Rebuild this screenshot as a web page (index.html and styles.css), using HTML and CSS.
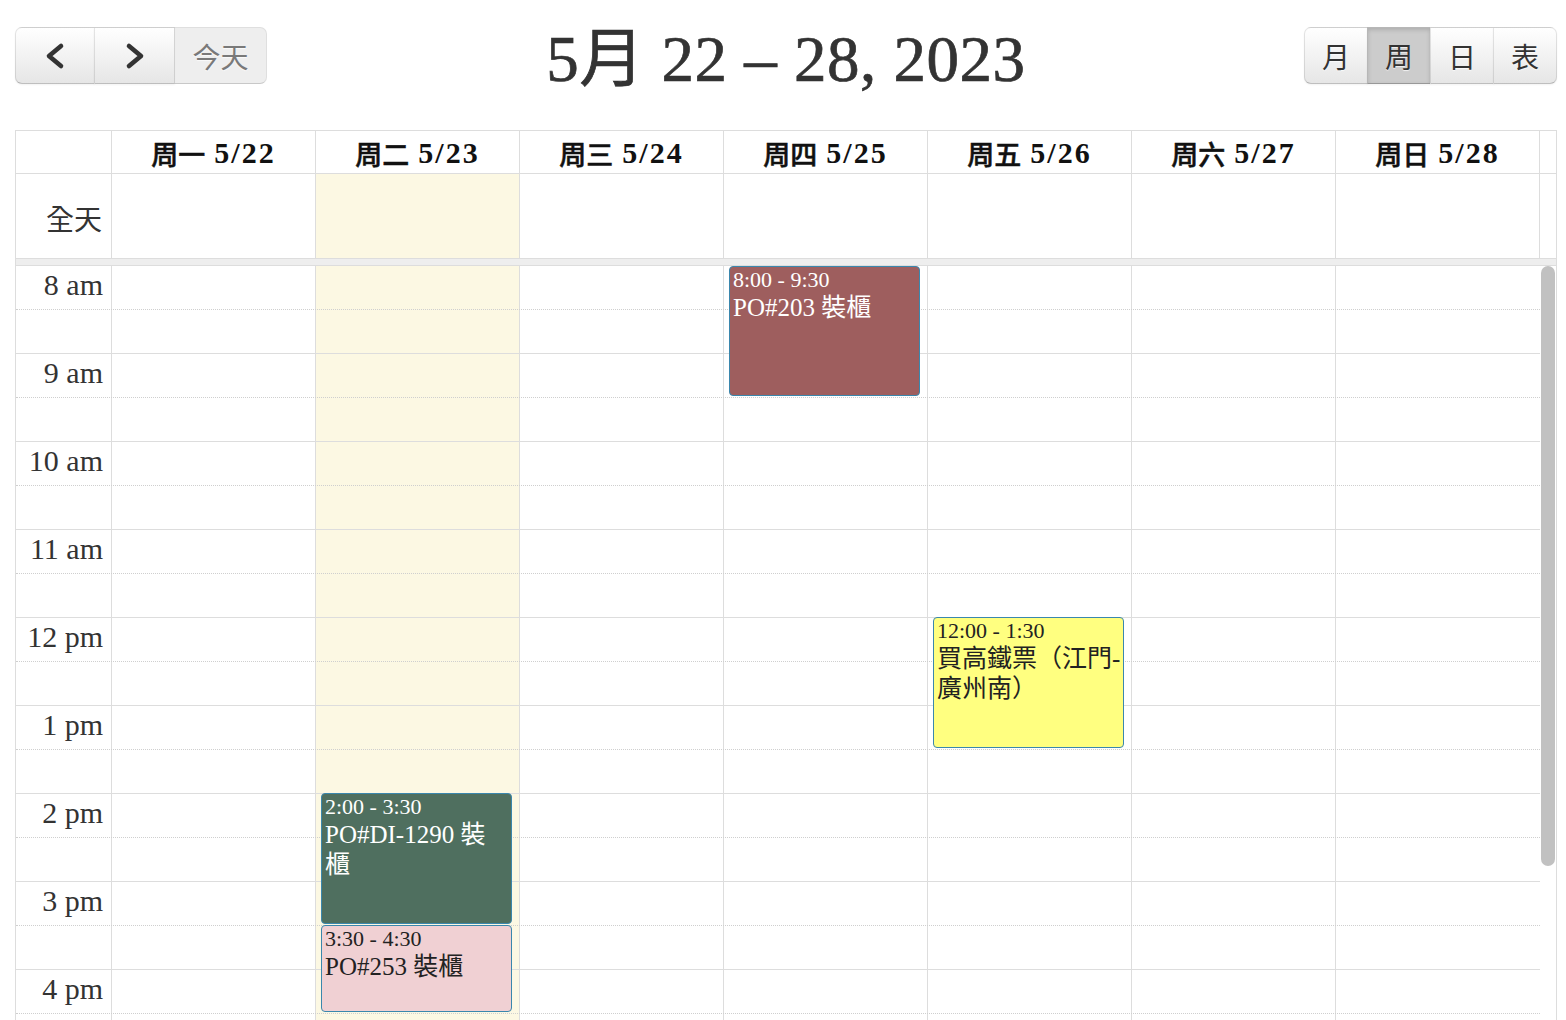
FILE: index.html
```html
<!DOCTYPE html>
<html lang="zh-Hant">
<head>
<meta charset="utf-8">
<title>周 5月 22 – 28, 2023</title>
<link rel="stylesheet" href="styles.css">
</head>
<body>
<div class="cal">
  <div class="toolbar">
    <div class="tb-left">
      <div class="btn-group">
        <button class="btn btn-nav" aria-label="prev">
          <svg width="22" height="28" viewBox="0 0 22 28"><path d="M17 4 L5 14 L17 24" fill="none" stroke="#333" stroke-width="4.6" stroke-linecap="round" stroke-linejoin="round"/></svg>
        </button>
        <button class="btn btn-nav btn-next" aria-label="next">
          <svg width="22" height="28" viewBox="0 0 22 28"><path d="M5 4 L17 14 L5 24" fill="none" stroke="#333" stroke-width="4.6" stroke-linecap="round" stroke-linejoin="round"/></svg>
        </button>
        <button class="btn btn-today is-disabled">今天</button>
      </div>
    </div>
    <h2 class="title">5月 22 – 28, 2023</h2>
    <div class="tb-right">
      <div class="btn-group">
        <button class="btn btn-view">月</button>
        <button class="btn btn-view is-active">周</button>
        <button class="btn btn-view">日</button>
        <button class="btn btn-view">表</button>
      </div>
    </div>
  </div>

  <div class="view">
    <div class="row head">
      <div class="axis"></div>
      <div class="dcell hcell"><span class="wd">周一</span><span class="dt">5/22</span></div>
      <div class="dcell hcell"><span class="wd">周二</span><span class="dt">5/23</span></div>
      <div class="dcell hcell"><span class="wd">周三</span><span class="dt">5/24</span></div>
      <div class="dcell hcell"><span class="wd">周四</span><span class="dt">5/25</span></div>
      <div class="dcell hcell"><span class="wd">周五</span><span class="dt">5/26</span></div>
      <div class="dcell hcell"><span class="wd">周六</span><span class="dt">5/27</span></div>
      <div class="dcell hcell"><span class="wd">周日</span><span class="dt">5/28</span></div>
      <div class="gutter"></div>
    </div>

    <div class="row allday">
      <div class="axis allday-label">全天</div>
      <div class="dcell"></div>
      <div class="dcell today"></div>
      <div class="dcell"></div>
      <div class="dcell"></div>
      <div class="dcell"></div>
      <div class="dcell"></div>
      <div class="dcell"></div>
      <div class="gutter"></div>
    </div>

    <div class="divider"></div>

    <div class="timegrid">
      <div class="layer bg">
        <div class="axis"></div>
        <div class="dcell"></div>
        <div class="dcell today"></div>
        <div class="dcell"></div>
        <div class="dcell"></div>
        <div class="dcell"></div>
        <div class="dcell"></div>
        <div class="dcell last"></div>
        <div class="gutter"></div>
      </div>

      <div class="layer slats">
        <div class="slat hour"><div class="label">8 am</div></div>
        <div class="slat"></div>
        <div class="slat hour"><div class="label">9 am</div></div>
        <div class="slat"></div>
        <div class="slat hour"><div class="label">10 am</div></div>
        <div class="slat"></div>
        <div class="slat hour"><div class="label">11 am</div></div>
        <div class="slat"></div>
        <div class="slat hour"><div class="label">12 pm</div></div>
        <div class="slat"></div>
        <div class="slat hour"><div class="label">1 pm</div></div>
        <div class="slat"></div>
        <div class="slat hour"><div class="label">2 pm</div></div>
        <div class="slat"></div>
        <div class="slat hour"><div class="label">3 pm</div></div>
        <div class="slat"></div>
        <div class="slat hour"><div class="label">4 pm</div></div>
        <div class="slat"></div>
        <div class="slat hour"><div class="label">5 pm</div></div>
        <div class="slat"></div>
        <div class="slat hour"><div class="label">6 pm</div></div>
        <div class="slat"></div>
      </div>

      <div class="layer content">
        <div class="axis-space"></div>
        <div class="col"></div>
        <div class="col">
          <div class="event ev-green" style="top:527px;height:131px">
            <div class="ev-time">2:00 - 3:30</div>
            <div class="ev-title">PO#DI-1290 裝櫃</div>
          </div>
          <div class="event ev-pink" style="top:659px;height:87px">
            <div class="ev-time">3:30 - 4:30</div>
            <div class="ev-title">PO#253 裝櫃</div>
          </div>
        </div>
        <div class="col"></div>
        <div class="col">
          <div class="event ev-red" style="top:0px;height:130px">
            <div class="ev-time">8:00 - 9:30</div>
            <div class="ev-title">PO#203 裝櫃</div>
          </div>
        </div>
        <div class="col">
          <div class="event ev-yellow" style="top:351px;height:131px">
            <div class="ev-time">12:00 - 1:30</div>
            <div class="ev-title">買高鐵票（江門-廣州南）</div>
          </div>
        </div>
        <div class="col"></div>
        <div class="col"></div>
        <div class="gutter"><div class="thumb"></div></div>
      </div>
    </div>
  </div>
</div>
</body>
</html>
```

FILE: styles.css
```css
html, body {
  margin: 0;
  padding: 0;
  overflow: hidden;
  background: #fff;
}

body {
  font-family: "Liberation Serif", "Noto Sans CJK TC", serif;
  color: #333;
}

.cal {
  padding: 27px 9px 0 15px;
}

/* ---------- toolbar ---------- */
.toolbar {
  display: grid;
  grid-template-columns: 1fr auto 1fr;
  grid-template-rows: 57px;
  align-items: start;
  margin-bottom: 46px;
}

.tb-left { justify-self: start; }
.tb-right { justify-self: end; }

.btn-group {
  display: flex;
}

.btn {
  height: 57px;
  box-sizing: border-box;
  margin: 0 0 0 -1px;
  padding: 0;
  display: flex;
  align-items: center;
  justify-content: center;
  font-family: "Liberation Serif", "Noto Sans CJK TC", serif;
  font-size: 28px;
  color: #333;
  background-color: #f5f5f5;
  background-image: linear-gradient(to bottom, #ffffff, #e6e6e6);
  border: 1px solid rgba(0, 0, 0, 0.1);
  border-bottom-color: rgba(0, 0, 0, 0.25);
  text-shadow: 0 1px 1px rgba(255, 255, 255, 0.75);
  box-shadow: inset 0 1px 0 rgba(255, 255, 255, 0.2), 0 1px 2px rgba(0, 0, 0, 0.05);
}

.btn:first-child {
  margin-left: 0;
  border-radius: 7px 0 0 7px;
}

.btn:last-child {
  border-radius: 0 7px 7px 0;
}

.btn-nav { width: 80px; }
.btn-next { width: 81px; }
.btn-today { width: 93px; }
.btn-view { width: 64px; }

.btn.is-disabled {
  background-image: none;
  background-color: #e6e6e6;
  opacity: 0.65;
  box-shadow: none;
}

.btn.is-active {
  background-image: none;
  background-color: #cccccc;
  box-shadow: inset 0 2px 4px rgba(0, 0, 0, 0.15), 0 1px 2px rgba(0, 0, 0, 0.05);
}

.title {
  margin: 0;
  font-size: 65px;
  font-weight: normal;
  line-height: 64px;
  color: #333;
  white-space: nowrap;
  letter-spacing: 0.5px;
  -webkit-text-stroke: 0.7px #333;
}

/* ---------- view ---------- */
.view {
  border: 1px solid #ddd;
  border-bottom: none;
}

.row {
  display: flex;
}

.axis {
  width: 96px;
  flex: none;
  box-sizing: border-box;
  border-right: 1px solid #ddd;
}

.dcell {
  width: 204px;
  flex: none;
  box-sizing: border-box;
  border-right: 1px solid #ddd;
}

.gutter {
  width: 16px;
  flex: none;
}

.today {
  background: #fcf8e3;
}

.head {
  height: 42px;
  border-bottom: 1px solid #ddd;
}

.hcell {
  display: flex;
  align-items: center;
  justify-content: center;
  gap: 9px;
  padding-top: 2px;
  color: #111;
  white-space: nowrap;
}

.wd {
  font-size: 27px;
  font-weight: 500;
  -webkit-text-stroke: 0.5px #111;
}

.dt {
  font-size: 30px;
  font-weight: bold;
  letter-spacing: 2px;
}

.allday {
  height: 84px;
  border-bottom: 1px solid #ddd;
}

.allday-label {
  display: flex;
  align-items: center;
  justify-content: flex-end;
  padding-right: 9px;
  padding-top: 4px;
  font-size: 28px;
}

.divider {
  height: 6px;
  background: #eee;
  border-bottom: 1px solid #ddd;
}

/* ---------- time grid ---------- */
.timegrid {
  display: grid;
}

.layer {
  grid-area: 1 / 1;
}

.bg {
  display: flex;
}

.bg .last {
  border-right: none;
}

.slats {
  margin-right: 16px;
}

.slat {
  height: 43px;
  border-bottom: 1px solid #ddd;
}

.slat.hour {
  border-bottom-style: dotted;
  border-bottom-color: #cfcfcf;
}

.label {
  width: 96px;
  box-sizing: border-box;
  padding: 2px 9px 0 0;
  text-align: right;
  font-size: 30px;
  line-height: 34px;
  color: #333;
  white-space: nowrap;
}

.content {
  display: flex;
}

.axis-space {
  width: 96px;
  flex: none;
}

.col {
  width: 204px;
  flex: none;
  position: relative;
}

.thumb {
  width: 14px;
  height: 600px;
  margin: 0 1px;
  border-radius: 7px;
  background: #c1c1c1;
}

/* ---------- events ---------- */
.event {
  position: absolute;
  left: 5px;
  right: 8px;
  box-sizing: border-box;
  border: 1px solid #3a87ad;
  border-radius: 4px;
  padding: 0 2px 0 3px;
  overflow: hidden;
}

.ev-time {
  font-size: 22px;
  line-height: 26px;
  white-space: nowrap;
}

.ev-title {
  font-size: 25px;
  line-height: 30px;
}

.ev-red {
  background: #9e5e5e;
  color: #fff;
}

.ev-green {
  background: #4f6f5f;
  color: #fff;
}

.ev-pink {
  background: #f0d0d3;
  color: #222;
}

.ev-yellow {
  background: #ffff80;
  color: #222;
}
```
